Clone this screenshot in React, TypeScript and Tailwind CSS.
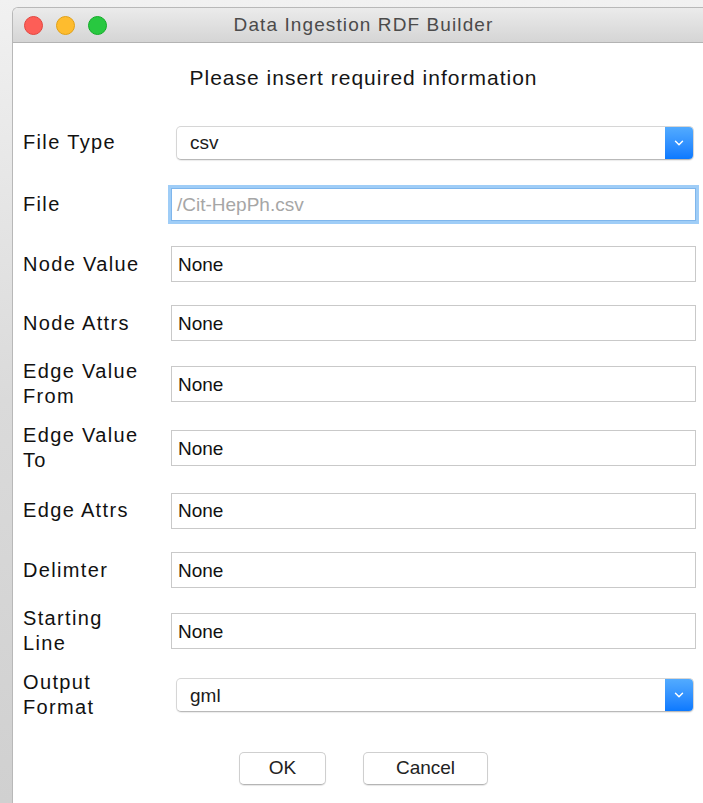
import { ChevronDown } from "lucide-react";

const font = "font-['Liberation_Sans',Arial,sans-serif]";

type Row =
  | { label: string[]; kind: "select"; value: string; h: string }
  | { label: string[]; kind: "input"; value: string; h: string; placeholder?: boolean; focused?: boolean };

const rows: Row[] = [
  { label: ["File Type"], kind: "select", value: "csv", h: "h-[61px]" },
  { label: ["File"], kind: "input", value: "/Cit-HepPh.csv", placeholder: true, focused: true, h: "h-[62px]" },
  { label: ["Node Value"], kind: "input", value: "None", h: "h-[58px]" },
  { label: ["Node Attrs"], kind: "input", value: "None", h: "h-[60px]" },
  { label: ["Edge Value", "From"], kind: "input", value: "None", h: "h-[62px]" },
  { label: ["Edge Value", "To"], kind: "input", value: "None", h: "h-[66px]" },
  { label: ["Edge Attrs"], kind: "input", value: "None", h: "h-[59px]" },
  { label: ["Delimter"], kind: "input", value: "None", h: "h-[60px]" },
  { label: ["Starting", "Line"], kind: "input", value: "None", h: "h-[62px]" },
  { label: ["Output", "Format"], kind: "select", value: "gml", h: "h-[66px]" },
];

function SelectBox({ value }: { value: string }) {
  return (
    <div className="ml-[5px] mr-[2px] flex h-[34px] flex-1 overflow-hidden rounded-[5px] border border-[#d6d6d6] border-b-[#b9b9b9] bg-white shadow-[0_1px_1px_rgba(0,0,0,0.08)]">
      <div className="flex flex-1 items-center pl-[13px] text-[19px] leading-none text-[#1c1c1c]">{value}</div>
      <div className="flex w-[28px] items-center justify-center bg-gradient-to-b from-[#52abff] to-[#0a79ff]">
        <ChevronDown size={14} strokeWidth={2.5} className="text-white" />
      </div>
    </div>
  );
}

function TextBox({ value, placeholder, focused }: { value: string; placeholder?: boolean; focused?: boolean }) {
  return (
    <div
      className={
        focused
          ? "flex h-[33px] flex-1 items-center border border-[#7fb6ec] bg-white pl-[5px] shadow-[0_0_0_3px_#9fcdf7]"
          : "flex h-[36px] flex-1 items-center border border-[#c9c9c9] bg-white pl-[6px]"
      }
    >
      <span className={placeholder ? "text-[19px] leading-none text-[#a6a6a6]" : "text-[19px] leading-none text-[#111]"}>{value}</span>
    </div>
  );
}

export default function App() {
  return (
    <div className={`${font} h-[803px] w-full overflow-hidden bg-gradient-to-b from-[#f1f1f1] via-[#dadada] to-[#d0d0d0] pl-[12px] pt-[7px]`}>
      <div className="w-[702px] overflow-hidden rounded-t-[6px] border-l border-t border-[#b8b8b8] bg-white">
        {/* title bar */}
        <div className="relative flex h-[35px] items-center justify-center border-b border-[#b3b3b3] bg-gradient-to-b from-[#ebebeb] to-[#d5d5d5]">
          <div className="absolute left-[11px] top-[8px] flex gap-[13px]">
            <span className="h-[19px] w-[19px] rounded-full border border-[#e2463f] bg-[#fd5e57]" />
            <span className="h-[19px] w-[19px] rounded-full border border-[#e1a116] bg-[#febc2e]" />
            <span className="h-[19px] w-[19px] rounded-full border border-[#12ac28] bg-[#28c840]" />
          </div>
          <span className="text-[19px] tracking-[1.1px] text-[#4b4b4b]">Data Ingestion RDF Builder</span>
        </div>

        <div className="flex h-[69px] items-center justify-center text-[21px] tracking-[1px] text-[#151515]">
          Please insert required information
        </div>

        <div className="pl-[10px] pr-[18px]">
          {rows.map((r) => (
            <div key={r.label.join(" ")} className={`flex items-center ${r.h}`}>
              <div className="w-[148px] text-[20px] leading-[25px] tracking-[1.35px] text-[#111]">
                {r.label.map((l) => (
                  <div key={l}>{l}</div>
                ))}
              </div>
              {r.kind === "select" ? (
                <SelectBox value={r.value} />
              ) : (
                <TextBox value={r.value} placeholder={r.placeholder} focused={r.focused} />
              )}
            </div>
          ))}
        </div>

        <div className="mt-[24px] flex justify-center gap-[37px] pb-[40px]">
          <button className="h-[33px] w-[87px] rounded-[5px] border border-[#cfcfcf] border-b-[#b5b5b5] bg-white text-[19px] text-[#222] shadow-[0_1px_1px_rgba(0,0,0,0.1)]">
            OK
          </button>
          <button className="h-[33px] w-[125px] rounded-[5px] border border-[#cfcfcf] border-b-[#b5b5b5] bg-white text-[19px] text-[#222] shadow-[0_1px_1px_rgba(0,0,0,0.1)]">
            Cancel
          </button>
        </div>
      </div>
    </div>
  );
}
